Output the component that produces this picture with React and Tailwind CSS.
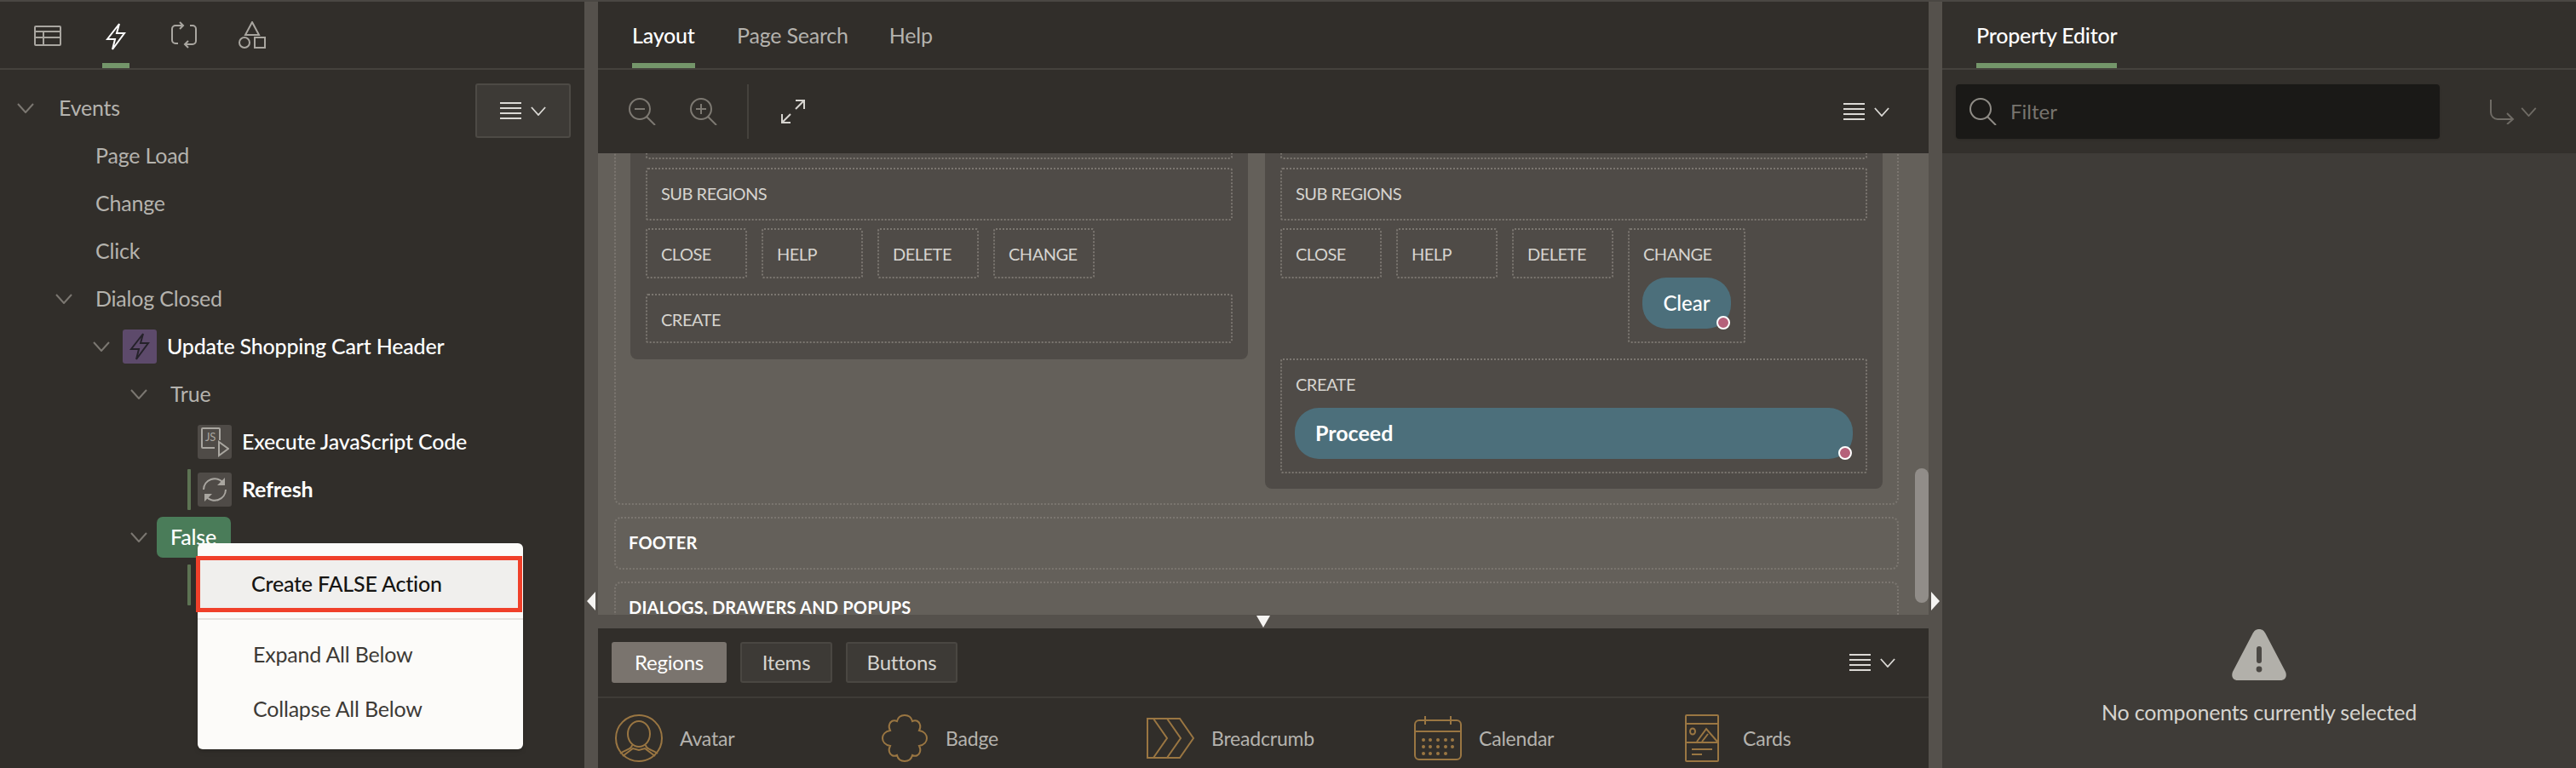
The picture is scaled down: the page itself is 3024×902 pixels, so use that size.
const Chevron = ({ className = "w-[20px] h-[12px]", color = "#7b7771" }) => (
  <svg viewBox="0 0 20 12" className={className} fill="none" stroke={color} strokeWidth="2">
    <path d="M1 1l9 10 9-10" />
  </svg>
);

const Bars = () => (
  <svg width="25" height="22" viewBox="0 0 25 22" stroke="#dbd9d5" strokeWidth="2">
    <path d="M0 2h25M0 8h25M0 14h25M0 20h25" />
  </svg>
);

const MenuGlyph = ({ gap = "gap-[11px]" }) => (
  <div className={`flex items-center ${gap}`}>
    <Bars />
    <Chevron className="w-[18px] h-[11px]" color="#dbd9d5" />
  </div>
);

const Triangle = ({ dir }) => {
  const paths = {
    left: "M10 0v22L0 11z",
    right: "M0 0v22l10-11z",
    down: "M0 0h16L8 14z",
  };
  const size = dir === "down" ? [16, 14] : [10, 22];
  return (
    <svg width={size[0]} height={size[1]} fill="#f5f4f2">
      <path d={paths[dir]} />
    </svg>
  );
};

const Row = ({ pad, children }) => (
  <div className={`flex h-14 items-center ${pad}`}>{children}</div>
);

const BoltPath = "M16 1 2 19h9L8 31l14-19h-9z";

const TreeIcon = ({ bg, children }) => (
  <div className={`flex h-10 w-10 items-center justify-center rounded-[3px] ${bg}`}>{children}</div>
);

const LeftTabs = () => (
  <div className="flex h-20 items-center gap-0 border-b-2 border-[#45423d] pl-[40px] relative">
    <svg width="32" height="24" viewBox="0 0 32 24" fill="none" stroke="#a9a6a0" strokeWidth="2" className="mt-[2px]">
      <rect x="1" y="1" width="30" height="22" rx="1" />
      <path d="M1 7h30M1 14h30M11 7v16" />
    </svg>
    <div className="ml-[48px] flex h-full w-[32px] flex-col items-center justify-between">
      <svg width="24" height="32" viewBox="0 0 24 32" fill="none" stroke="#ffffff" strokeWidth="2" className="mt-[25px]">
        <path d={BoltPath} />
      </svg>
      <div className="h-[6px] w-[32px] bg-[#74966a]" />
    </div>
    <svg width="32" height="32" viewBox="0 0 32 32" fill="none" stroke="#a9a6a0" strokeWidth="2" className="ml-[48px]">
      <path d="M15 5H6a4 4 0 0 0-4 4v13a4 4 0 0 0 4 4h3M11 1l4 4-4 4M17 27h9a4 4 0 0 0 4-4V9a4 4 0 0 0-4-4h-3M21 23l-4 4 4 4" />
    </svg>
    <svg width="32" height="32" viewBox="0 0 32 32" fill="none" stroke="#a9a6a0" strokeWidth="2" className="ml-[48px]">
      <path d="M16 1l8 15H8z" />
      <ellipse cx="7" cy="25" rx="6" ry="6" />
      <rect x="19" y="19" width="12" height="12" />
    </svg>
  </div>
);

const ActionBar = () => <div className="h-12 w-1 rounded-[1px] bg-[#5d7353]" />;

const Tree = () => (
  <div className="relative pt-[17px] text-[25px] tracking-[-0.2px] text-[#b5b3ae]">
    <Row pad="pl-[20px]">
      <Chevron />
      <span className="ml-[29px]">Events</span>
    </Row>
    <Row pad="pl-[112px]">Page Load</Row>
    <Row pad="pl-[112px]">Change</Row>
    <Row pad="pl-[112px]">Click</Row>
    <Row pad="pl-[65px]">
      <Chevron />
      <span className="ml-[27px]">Dialog Closed</span>
    </Row>
    <Row pad="pl-[109px]">
      <Chevron />
      <div className="ml-[15px]">
        <TreeIcon bg="bg-[#5d4a6b]">
          <svg width="24" height="32" viewBox="0 0 24 32" fill="none" stroke="#25222a" strokeWidth="2">
            <path d={BoltPath} />
          </svg>
        </TreeIcon>
      </div>
      <span className="ml-[12px] font-medium text-white">Update Shopping Cart Header</span>
    </Row>
    <Row pad="pl-[153px]">
      <Chevron />
      <span className="ml-[27px]">True</span>
    </Row>
    <Row pad="pl-[232px]">
      <TreeIcon bg="bg-[#4f4b47]">
        <svg width="34" height="36" viewBox="0 0 34 36" fill="none" stroke="#a9a6a0" strokeWidth="2">
          <path d="M17 25H3a1 1 0 0 1-1-1V3a1 1 0 0 1 1-1h19a1 1 0 0 1 1 1v13" />
          <path d="M22 18v16l11-8z" />
          <text x="6" y="17" fontSize="13" fill="#a9a6a0" stroke="none" fontFamily="Lato">JS</text>
        </svg>
      </TreeIcon>
      <span className="ml-[12px] font-medium text-white">Execute JavaScript Code</span>
    </Row>
    <Row pad="pl-[220px]">
      <ActionBar />
      <div className="ml-[8px]">
        <TreeIcon bg="bg-[#4f4b47]">
          <svg width="30" height="30" viewBox="0 0 30 30" fill="none" stroke="#a9a6a0" strokeWidth="2">
            <path d="M2 15A13 13 0 0 1 25 7M28 15A13 13 0 0 1 5 23" />
            <path d="M27 1v9h-9zM3 29v-9h9z" fill="#a9a6a0" stroke="none" />
          </svg>
        </TreeIcon>
      </div>
      <span className="ml-[12px] font-bold text-white">Refresh</span>
    </Row>
    <Row pad="pl-[153px]">
      <Chevron />
      <div className="ml-[11px] flex h-12 w-[87px] items-center rounded-[7px] bg-[#4a7c59] pl-[16px] font-medium text-white">
        False
      </div>
    </Row>
    <Row pad="pl-[220px]">
      <ActionBar />
    </Row>

    <button className="absolute left-[558px] top-[16px] flex h-[64px] w-[112px] items-center justify-center rounded-[3px] border-2 border-[#4d4a45] bg-[#3d3a36]">
      <MenuGlyph />
    </button>

    <div className="absolute left-[232px] top-[556px] z-10 h-[242px] w-[382px] rounded-[6px] bg-[#fcfbf9] shadow-md">
      <div className="-ml-[2px] mt-[15px] flex h-[66px] w-[383px] items-center border-[5px] border-[#f0402a] bg-[#f0efed] pl-[60px] font-medium text-[#161513]">
        Create FALSE Action
      </div>
      <div className="mt-[7px] h-[2px] bg-[#e4e2df]" />
      <div className="flex h-[64px] items-center pl-[65px] mt-[9px] text-[#3d3a36]">Expand All Below</div>
      <div className="flex h-[64px] items-center pl-[65px] text-[#3d3a36]">Collapse All Below</div>
    </div>
  </div>
);

const Dotted = ({ className, children }) => (
  <div className={`rounded-[3px] border-2 border-dotted border-[#7b7670] ${className}`}>{children}</div>
);

const Label = ({ children }) => (
  <div className="pl-[16px] pt-[14px] text-[20px] leading-[28px] tracking-[-0.5px] text-[#d6d4cf]">{children}</div>
);

const Dot = () => (
  <span className="absolute bottom-[-1px] right-[1px] h-[16px] w-[16px] rounded-full border-2 border-white bg-[#b5617a]" />
);

const SmallBoxes = ({ last }) => (
  <div className="mt-[9px] flex items-start gap-[17px]">
    <Dotted className="h-[59px] w-[119px]"><Label>CLOSE</Label></Dotted>
    <Dotted className="h-[59px] w-[119px]"><Label>HELP</Label></Dotted>
    <Dotted className="h-[59px] w-[119px]"><Label>DELETE</Label></Dotted>
    {last}
  </div>
);

const Canvas = () => (
  <div className="relative min-h-0 flex-1 overflow-hidden bg-[#64605a]">
    <div className="ml-[19px] mr-[35px] -mt-[40px] flex h-[453px] items-start justify-center gap-[20px] rounded-[8px] border-2 border-dotted border-[#7b7670] pt-0">
      <div className="h-[280px] w-[725px] rounded-b-[8px] bg-[#4f4b47] px-[18px]">
        <Dotted className="mt-[8px] h-[37px]" />
        <Dotted className="mt-[10px] h-[62px]"><Label>SUB REGIONS</Label></Dotted>
        <SmallBoxes last={<Dotted className="h-[59px] w-[119px]"><Label>CHANGE</Label></Dotted>} />
        <Dotted className="mt-[18px] h-[58px]"><Label>CREATE</Label></Dotted>
      </div>
      <div className="h-[432px] w-[725px] rounded-b-[8px] bg-[#4f4b47] px-[18px]">
        <Dotted className="mt-[8px] h-[37px]" />
        <Dotted className="mt-[10px] h-[62px]"><Label>SUB REGIONS</Label></Dotted>
        <SmallBoxes
          last={
            <Dotted className="h-[135px] w-[138px]">
              <Label>CHANGE</Label>
              <div className="relative ml-[15px] mt-[14px] flex h-[60px] w-[104px] items-center justify-center rounded-[28px] bg-[#4c6f7b] text-[24px] font-medium text-white">
                Clear
                <Dot />
              </div>
            </Dotted>
          }
        />
        <Dotted className="mt-[18px] h-[135px]">
          <Label>CREATE</Label>
          <div className="relative ml-[15px] mr-[15px] mt-[14px] flex h-[60px] items-center rounded-[28px] bg-[#4c6f7b] pl-[24px] text-[25px] font-bold text-white">
            Proceed
            <Dot />
          </div>
        </Dotted>
      </div>
    </div>
    <Dotted className="ml-[19px] mr-[35px] mt-[14px] h-[62px] !rounded-[8px]">
      <div className="pl-[15px] pt-[14px] text-[20px] font-bold leading-[28px] tracking-[0.2px] text-white">FOOTER</div>
    </Dotted>
    <Dotted className="ml-[19px] mr-[35px] mt-[14px] h-[62px] !rounded-[8px]">
      <div className="pl-[15px] pt-[14px] text-[20px] font-bold leading-[28px] tracking-[0.2px] text-white">DIALOGS, DRAWERS AND POPUPS</div>
    </Dotted>
    {/* scrollbar sits on top of the canvas */}
    <div className="absolute right-0 top-[370px] h-[158px] w-[16px] rounded-[8px] bg-[#918d89]" />
  </div>
);

const Gallery = () => {
  const stroke = { fill: "none", stroke: "#9a7642", strokeWidth: 2 };
  const items = [
    {
      name: "Avatar",
      icon: (
        <svg width="56" height="56" viewBox="0 0 56 56" {...stroke}>
          <ellipse cx="28" cy="28" rx="27" ry="27" />
          <ellipse cx="28" cy="23" rx="13" ry="15" />
          <path d="M20 36c0 5-7 5-14 10M36 36c0 5 7 5 14 10M9 49l12-9 7 2 7-2 12 9" />
        </svg>
      ),
    },
    {
      name: "Badge",
      icon: (
        <svg width="56" height="56" viewBox="0 0 56 56" {...stroke}>
          <path d="M28 1c5 0 8 3 9 7 4-2 8 0 9 4 1 3 0 5-1 7 6 1 9 5 9 9s-3 8-9 9c1 2 2 4 1 7-1 4-5 6-9 4-1 4-4 7-9 7s-8-3-9-7c-4 2-8 0-9-4-1-3 0-5 1-7-6-1-9-5-9-9s3-8 9-9c-1-2-2-4-1-7 1-4 5-6 9-4 1-4 4-7 9-7z" />
        </svg>
      ),
    },
    {
      name: "Breadcrumb",
      icon: (
        <svg width="56" height="50" viewBox="0 0 56 50" {...stroke}>
          <path d="M1 2h38l16 23-16 23H1z" />
          <path d="M8 2l16 23-16 23M24 2l16 23-16 23" />
        </svg>
      ),
    },
    {
      name: "Calendar",
      icon: (
        <svg width="56" height="52" viewBox="0 0 56 52" {...stroke}>
          <rect x="1" y="5" width="54" height="46" rx="5" />
          <path d="M1 18h54M13 0v10M43 0v10" />
          <path
            d="M11 28h.01M19 28h.01M28 28h.01M37 28h.01M45 28h.01M11 36h.01M19 36h.01M28 36h.01M37 36h.01M45 36h.01M11 44h.01M19 44h.01M28 44h.01M37 44h.01"
            strokeWidth="4"
            strokeLinecap="round"
          />
        </svg>
      ),
    },
    {
      name: "Cards",
      icon: (
        <svg width="40" height="56" viewBox="0 0 40 56" {...stroke}>
          <rect x="1" y="1" width="38" height="54" rx="1" />
          <path d="M1 11h38M1 33h38M8 41h24M8 47h12M14 32l11-15 13 15M20 32l7-9" />
          <ellipse cx="9" cy="20" rx="3" ry="3.5" />
        </svg>
      ),
    },
  ];
  return (
    <div className="grid grid-cols-[312px_312px_314px_310px_auto] pl-[20px] pt-[19px]">
      {items.map((item) => (
        <div key={item.name} className="flex h-[56px] items-center">
          <div className="flex w-[56px] justify-center">{item.icon}</div>
          <span className="ml-[20px] text-[23px] tracking-[-0.2px] text-[#b5b3ae]">{item.name}</span>
        </div>
      ))}
    </div>
  );
};

const CenterTab = ({ label, active, className }) => (
  <div className={`flex h-full flex-col justify-between ${className}`}>
    <span className={`whitespace-nowrap pt-[25px] text-[25px] leading-[28px] tracking-[-0.2px] ${active ? "font-medium text-white" : "text-[#b5b3ae]"}`}>
      {label}
    </span>
    {active && <div className="h-[6px] bg-[#74966a]" />}
  </div>
);

const GalleryTab = ({ label, active, className }) => (
  <button
    className={`flex h-12 items-center justify-center rounded-[3px] text-[24px] tracking-[-0.2px] ${className} ${
      active ? "bg-[#7a746e] text-white" : "border-2 border-[#4a4742] bg-[#3d3a36] text-[#d6d4cf]"
    }`}
  >
    {label}
  </button>
);

const Center = () => (
  <div className="flex h-full w-[1562px] flex-col">
    <div className="flex h-20 shrink-0 border-b-2 border-[#45423d] bg-[#312e2a] pl-[40px]">
      <CenterTab label="Layout" active className="w-[74px]" />
      <CenterTab label="Page Search" className="ml-[49px]" />
      <CenterTab label="Help" className="ml-[48px]" />
    </div>
    <div className="flex h-[98px] shrink-0 items-center bg-[#312e2a] pl-[36px] pr-[46px]">
      <svg width="32" height="32" viewBox="0 0 32 32" fill="none" stroke="#7d7972" strokeWidth="2">
        <circle cx="13" cy="13" r="12" />
        <path d="M21 22l10 10M7 13h12" />
      </svg>
      <svg width="32" height="32" viewBox="0 0 32 32" fill="none" stroke="#7d7972" strokeWidth="2" className="ml-[40px]">
        <circle cx="13" cy="13" r="12" />
        <path d="M21 22l10 10M7 13h12M13 7v12" />
      </svg>
      <div className="ml-[35px] h-16 w-[2px] bg-[#45423d]" />
      <svg width="28" height="28" viewBox="0 0 28 28" fill="none" stroke="#d6d4cf" strokeWidth="2" className="ml-[38px]">
        <path d="M17 11L27 1M17 1h10v10M11 17L1 27M1 17v10h10" />
      </svg>
      <div className="ml-auto">
        <MenuGlyph />
      </div>
    </div>
    <Canvas />
    <div className="flex h-4 shrink-0 items-center justify-center bg-[#55514c]">
      <Triangle dir="down" />
    </div>
    <div className="flex h-[82px] shrink-0 items-center gap-[16px] border-b-2 border-[#3f3c37] bg-[#312e2a] pl-[16px] pr-[39px]">
      <GalleryTab label="Regions" active className="w-[135px]" />
      <GalleryTab label="Items" className="w-[108px]" />
      <GalleryTab label="Buttons" className="w-[131px]" />
      <div className="ml-auto">
        <MenuGlyph />
      </div>
    </div>
    <div className="h-[82px] shrink-0 overflow-hidden bg-[#312e2a]">
      <Gallery />
    </div>
  </div>
);

const RightPanel = () => (
  <div className="flex h-full w-[744px] flex-col">
    <div className="flex h-20 shrink-0 border-b-2 border-[#45423d] bg-[#33302c] pl-[40px]">
      <CenterTab label="Property Editor" active className="w-[165px]" />
    </div>
    <div className="flex h-[98px] shrink-0 items-center bg-[#33302c] pl-[16px]">
      <div className="flex h-16 w-[568px] items-center rounded-[4px] bg-[#1a1917] pl-[16px] shadow-sm">
        <svg width="32" height="32" viewBox="0 0 32 32" fill="none" stroke="#8f8c86" strokeWidth="2">
          <circle cx="13" cy="13" r="12" />
          <path d="M21 22l10 10" />
        </svg>
        <span className="ml-[16px] text-[24px] text-[#77746e]">Filter</span>
      </div>
      <svg width="30" height="30" viewBox="0 0 30 30" fill="none" stroke="#6f6b65" strokeWidth="2" className="ml-[58px]">
        <path d="M2 1v15a8 8 0 0 0 8 8h18M21 17l7 7-7 6" />
      </svg>
      <Chevron className="ml-[7px] w-[19px] h-[11px]" color="#6f6b65" />
    </div>
    <div className="flex min-h-0 flex-1 flex-col items-center bg-[#3f3c38] pt-[559px]">
      <svg width="64" height="60" viewBox="0 0 64 60">
        <path
          d="M32 0c4 0 6 2 8 6l23 44c2 5 0 10-6 10H7c-6 0-8-5-6-10L24 6c2-4 4-6 8-6z"
          fill="#b2b0aa"
        />
        <rect x="29" y="20" width="6" height="20" rx="3" fill="#4b4844" />
        <circle cx="32" cy="47" r="3.4" fill="#4b4844" />
      </svg>
      <div className="mt-[23px] text-[25px] leading-[28px] tracking-[-0.2px] text-[#d6d4cf]">No components currently selected</div>
    </div>
  </div>
);

const Splitter = ({ dir, side }) => (
  <div className={`flex h-full w-4 shrink-0 flex-col bg-[#55514c] pt-[693px] ${side}`}>
    <Triangle dir={dir} />
  </div>
);

export default function App() {
  return (
    <div className="flex h-[902px] w-[3024px] flex-col overflow-hidden bg-[#312e2a] font-['Lato',sans-serif]">
      <div className="h-[2px] shrink-0 bg-[#4a4743]" />
      <div className="flex min-h-0 flex-1">
        <div className="h-full w-[686px] shrink-0">
          <LeftTabs />
          <Tree />
        </div>
        <Splitter dir="left" side="items-center" />
        <Center />
        <Splitter dir="right" side="items-center" />
        <RightPanel />
      </div>
    </div>
  );
}
